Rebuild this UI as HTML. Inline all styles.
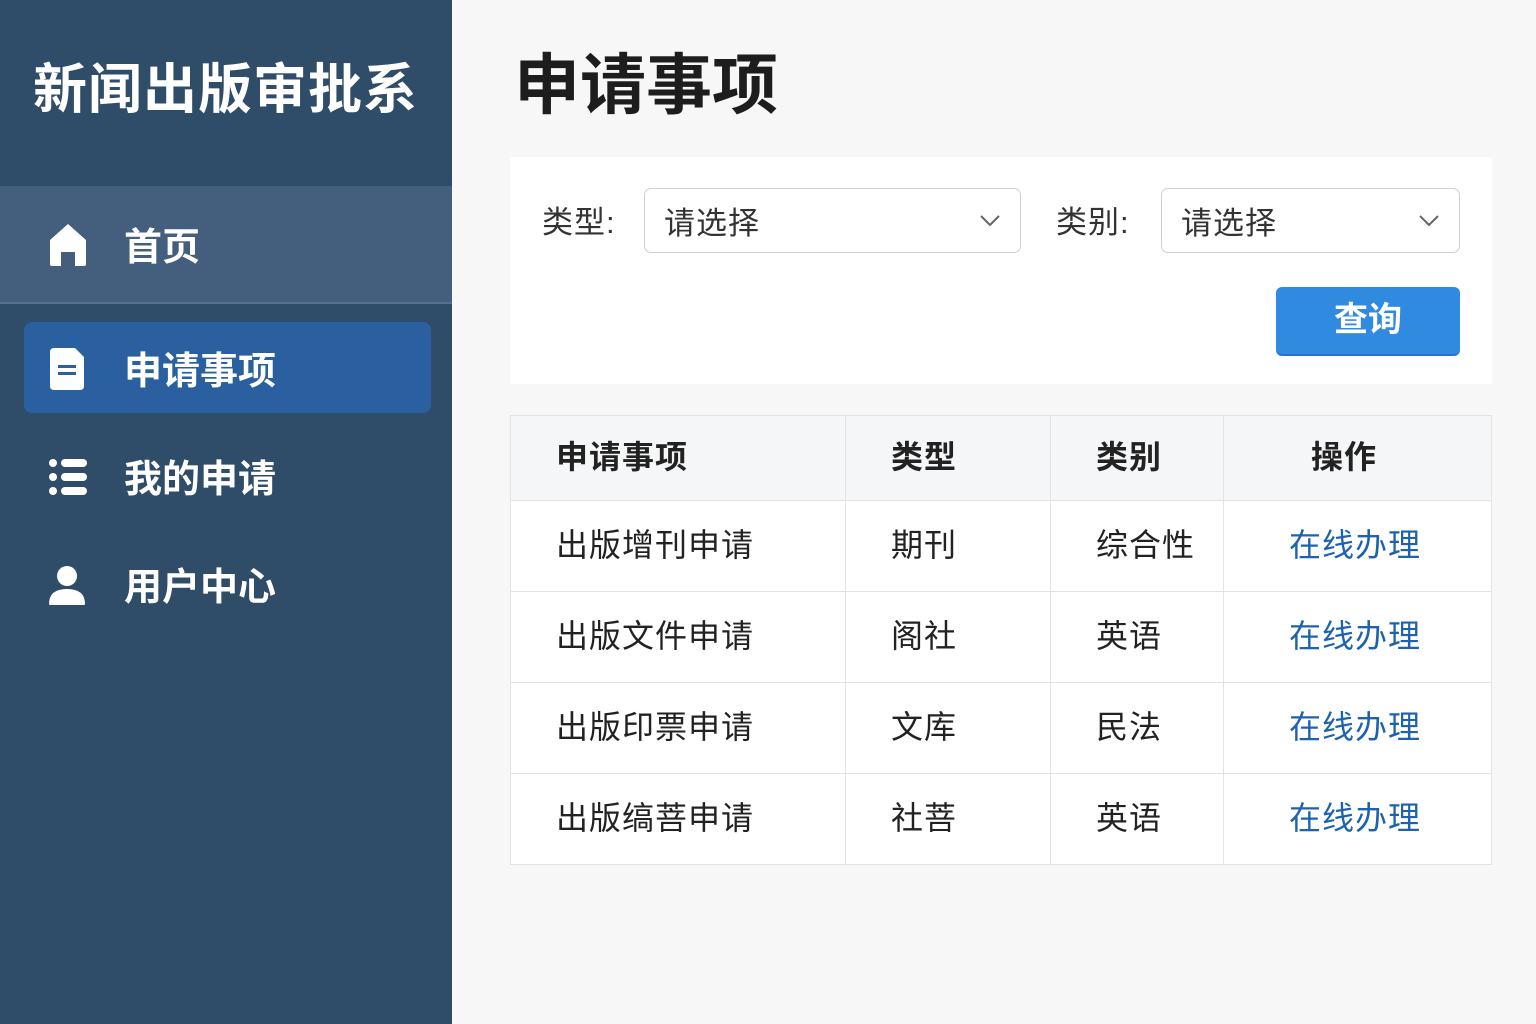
<!DOCTYPE html>
<html><head><meta charset="utf-8"><style>
*{margin:0;padding:0;box-sizing:border-box}
body{width:1536px;height:1024px;overflow:hidden;background:#f7f7f7;font-family:"Liberation Sans","Noto Sans CJK SC",sans-serif;position:relative}
.side{position:absolute;left:0;top:0;width:452px;height:1024px;background:#2f4c69}
.logo{position:absolute;left:33px;top:45px;font-size:54px;font-weight:bold;color:#fff;letter-spacing:1px}
.home{position:absolute;left:0;top:186px;width:452px;height:118px;background:#435f7d;border-bottom:2px solid #56708d}
.act{position:absolute;left:24px;top:322px;width:407px;height:91px;background:#2a609f;border-radius:8px}
.nt{position:absolute;left:124px;font-size:38px;font-weight:bold;color:#fff}
.ic{position:absolute;left:48px}
h1{position:absolute;left:514px;top:32px;font-size:66px;font-weight:bold;color:#1d1d1d}
.card{position:absolute;left:510px;top:157px;width:982px;height:227px;background:#fff}
.lbl{position:absolute;font-size:31px;color:#333;top:197px;letter-spacing:1px}
.sel{position:absolute;top:188px;height:65px;border:1px solid #cfcfcf;border-radius:7px;background:#fff;font-size:31px;color:#333;padding:9px 0 0 19px;letter-spacing:1px}
.sel svg{position:absolute;right:20px;top:26px}
.btn{position:absolute;left:1276px;top:287px;width:184px;height:69px;background:#2f8ae0;border-radius:6px;color:#fff;font-size:34px;font-weight:bold;text-align:center;line-height:66px;border-bottom:2px solid #2675c4}
table{position:absolute;left:510px;top:415px;width:982px;border-collapse:collapse;background:#fff;border:1px solid #e0e0e0}
td,th{border:1px solid #e3e3e3;font-size:32px;color:#222;height:91px;font-weight:normal;letter-spacing:1px;padding-bottom:6px}
th{height:85px;background:#f5f6f7;font-weight:bold}
.a{color:#1d62b0}
</style></head><body>
<div class="side">
<div class="logo">新闻出版审批系</div>
<div class="home"></div>
<svg class="ic" style="top:222px" width="40" height="46" viewBox="0 0 40 46"><path d="M20 2 L38 18 V42 Q38 44 36 44 H27 V30 H13 V44 H4 Q2 44 2 42 V18 Z" fill="#fff"/></svg>
<div class="nt" style="top:216px">首页</div>
<div class="act"></div>
<svg class="ic" style="top:348px;left:50px" width="36" height="42" viewBox="0 0 36 42"><path d="M4 0 H25 L34 9 V38 Q34 42 30 42 H4 Q0 42 0 38 V4 Q0 0 4 0 Z" fill="#fff"/><rect x="8" y="17" width="18" height="3" fill="#2a609f"/><rect x="8" y="24" width="18" height="3" fill="#2a609f"/></svg>
<div class="nt" style="top:340px">申请事项</div>
<svg class="ic" style="top:459px;left:49px" width="38" height="36" viewBox="0 0 38 36"><g fill="#fff"><circle cx="4" cy="4" r="4"/><circle cx="4" cy="18" r="4"/><circle cx="4" cy="32" r="4"/><rect x="12" y="0" width="26" height="8" rx="4"/><rect x="12" y="14" width="26" height="8" rx="4"/><rect x="12" y="28" width="26" height="8" rx="4"/></g></svg>
<div class="nt" style="top:448px">我的申请</div>
<svg class="ic" style="top:566px;left:49px" width="36" height="40" viewBox="0 0 36 40"><circle cx="18" cy="10" r="10" fill="#fff"/><path d="M0 38 Q0 23 18 23 Q36 23 36 38 Q36 39 34 39 H2 Q0 39 0 38Z" fill="#fff"/></svg>
<div class="nt" style="top:556px">用户中心</div>
</div>
<h1>申请事项</h1>
<div class="card"></div>
<div class="lbl" style="left:542px">类型:</div>
<div class="sel" style="left:644px;width:377px">请选择<svg width="20" height="12" viewBox="0 0 20 12"><path d="M1 1 L10 10 L19 1" stroke="#666" stroke-width="2" fill="none"/></svg></div>
<div class="lbl" style="left:1056px">类别:</div>
<div class="sel" style="left:1161px;width:299px">请选择<svg width="20" height="12" viewBox="0 0 20 12"><path d="M1 1 L10 10 L19 1" stroke="#666" stroke-width="2" fill="none"/></svg></div>
<div class="btn">查询</div>
<table>
<tr><th style="width:335px;text-align:left;padding-left:45px">申请事项</th><th style="width:205px;text-align:left;padding-left:45px">类型</th><th style="width:173px;text-align:left;padding-left:45px">类别</th><th style="text-align:left;padding-left:87px">操作</th></tr>
<tr><td style="padding-left:45px">出版增刊申请</td><td style="padding-left:45px">期刊</td><td style="padding-left:45px">综合性</td><td class="a" style="padding-left:65px">在线办理</td></tr>
<tr><td style="padding-left:45px">出版文件申请</td><td style="padding-left:45px">阁社</td><td style="padding-left:45px">英语</td><td class="a" style="padding-left:65px">在线办理</td></tr>
<tr><td style="padding-left:45px">出版印票申请</td><td style="padding-left:45px">文库</td><td style="padding-left:45px">民法</td><td class="a" style="padding-left:65px">在线办理</td></tr>
<tr><td style="padding-left:45px">出版缟菩申请</td><td style="padding-left:45px">社菩</td><td style="padding-left:45px">英语</td><td class="a" style="padding-left:65px">在线办理</td></tr>
</table>
</body></html>
